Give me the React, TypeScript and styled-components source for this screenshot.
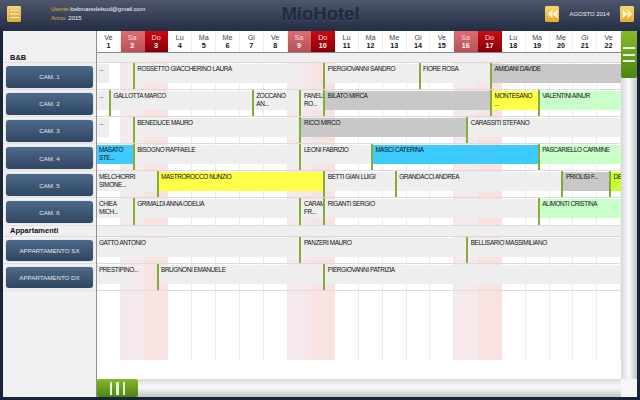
import styled, { createGlobalStyle } from 'styled-components';

type Tone = 'plain' | 'gray' | 'yellow' | 'blue' | 'green' | 'lime';

interface Booking {
  name: string;
  start: number;
  end: number;
  tone?: Tone;
}

const TONES: Record<Tone, string> = {
  plain: '#eeeeee',
  gray: '#c8c8c8',
  yellow: '#ffff4a',
  blue: '#3ecbff',
  green: '#c9ffc9',
  lime: '#ccff33',
};

const DAYS = [
  ['Ve', 1], ['Sa', 2], ['Do', 3], ['Lu', 4], ['Ma', 5], ['Me', 6], ['Gi', 7], ['Ve', 8],
  ['Sa', 9], ['Do', 10], ['Lu', 11], ['Ma', 12], ['Me', 13], ['Gi', 14], ['Ve', 15],
  ['Sa', 16], ['Do', 17], ['Lu', 18], ['Ma', 19], ['Me', 20], ['Gi', 21], ['Ve', 22],
] as const;

// start and end are half days from the first of the month
const ROOMS: { label: string; bookings: Booking[] }[] = [
  {
    label: 'CAM. 1',
    bookings: [
      { name: '...', start: 0, end: 1 },
      { name: 'ROSSETTO GIACCHERINO LAURA', start: 3, end: 17 },
      { name: 'PIERGIOVANNI SANDRO', start: 19, end: 27 },
      { name: 'FIORE ROSA', start: 27, end: 33 },
      { name: 'AMIDANI DAVIDE', start: 33, end: 44, tone: 'gray' },
    ],
  },
  {
    label: 'CAM. 2',
    bookings: [
      { name: '...', start: 0, end: 1 },
      { name: 'GALLOTTA MARCO', start: 1, end: 13 },
      { name: 'ZOCCANO AN...', start: 13, end: 17 },
      { name: 'FANELLI RO...', start: 17, end: 19 },
      { name: 'BILATO MIRCA', start: 19, end: 33, tone: 'gray' },
      { name: 'MONTESANO ...', start: 33, end: 37, tone: 'yellow' },
      { name: 'VALENTINI AINUR', start: 37, end: 44, tone: 'green' },
    ],
  },
  {
    label: 'CAM. 3',
    bookings: [
      { name: '...', start: 0, end: 1 },
      { name: 'BENEDUCE MAURO', start: 3, end: 17 },
      { name: 'RICCI MIRCO', start: 17, end: 31, tone: 'gray' },
      { name: 'CARASSITI STEFANO', start: 31, end: 44 },
    ],
  },
  {
    label: 'CAM. 4',
    bookings: [
      { name: 'MASATO STE...', start: 0, end: 3, tone: 'blue' },
      { name: 'BISOGNO RAFFAELE', start: 3, end: 17 },
      { name: 'LEONI FABRIZIO', start: 17, end: 23 },
      { name: 'MASCI CATERINA', start: 23, end: 37, tone: 'blue' },
      { name: 'PASCARIELLO CARMINE', start: 37, end: 44, tone: 'green' },
    ],
  },
  {
    label: 'CAM. 5',
    bookings: [
      { name: 'MELCHIORRI SIMONE...', start: 0, end: 5 },
      { name: 'MASTROROCCO NUNZIO', start: 5, end: 19, tone: 'yellow' },
      { name: 'BETTI GIAN LUIGI', start: 19, end: 25 },
      { name: 'GRANDACCI ANDREA', start: 25, end: 39 },
      { name: 'PRIOLISI F...', start: 39, end: 43, tone: 'gray' },
      { name: 'DE', start: 43, end: 44, tone: 'lime' },
    ],
  },
  {
    label: 'CAM. 6',
    bookings: [
      { name: 'CHIEA MICH...', start: 0, end: 3 },
      { name: 'GRIMALDI ANNA ODELIA', start: 3, end: 17 },
      { name: 'CARAM FR...', start: 17, end: 19 },
      { name: 'RIGANTI SERGIO', start: 19, end: 37 },
      { name: 'ALIMONTI CRISTINA', start: 37, end: 44, tone: 'green' },
    ],
  },
];

const FLATS: { label: string; bookings: Booking[] }[] = [
  {
    label: 'APPARTAMENTO SX',
    bookings: [
      { name: 'GATTO ANTONIO', start: 0, end: 17 },
      { name: 'PANZERI MAURO', start: 17, end: 31 },
      { name: 'BELLISARIO MASSIMILIANO', start: 31, end: 44 },
    ],
  },
  {
    label: 'APPARTAMENTO DX',
    bookings: [
      { name: 'PRESTIPINO...', start: 0, end: 3 },
      { name: 'BRUGNONI EMANUELE', start: 5, end: 19 },
      { name: 'PIERGIOVANNI PATRIZIA', start: 19, end: 44 },
    ],
  },
];

const GlobalStyle = createGlobalStyle`
  html, body {
    margin: 0;
    padding: 0;
    background: #1a2438;
  }
  * {
    box-sizing: border-box;
  }
`;

const Page = styled.div`
  width: 640px;
  height: 400px;
  overflow: hidden;
  display: flex;
  flex-direction: column;
  background: #1a2438;
  font-family: 'Liberation Sans', Arial, sans-serif;
`;

const Header = styled.header`
  height: 31px;
  flex: none;
  display: grid;
  grid-template-columns: 1fr auto 1fr;
  align-items: center;
  padding: 0 6px 3px 7px;
  background: linear-gradient(#4f576c, #232d43);
`;

const HeaderLeft = styled.div`
  display: flex;
  align-items: center;
`;

const GoldButton = styled.div`
  width: 14px;
  height: 16px;
  flex: none;
  display: flex;
  align-items: center;
  justify-content: center;
  border-radius: 2px;
  background: linear-gradient(#f6d873, #e9a91f);
  box-shadow: inset 0 0 1px #fff3c0;
`;

const UserInfo = styled.div`
  margin-left: 30px;
  font-size: 6px;
  line-height: 9.5px;
  color: #f6f6f6;
`;

const UserKey = styled.span`
  color: #e0b040;
`;

const Brand = styled.div`
  font-size: 18.5px;
  font-weight: 700;
  color: #1e2a42;
  text-shadow: 0 1px 0 #454e64;
`;

const MonthNav = styled.div`
  justify-self: end;
  width: 89px;
  display: flex;
  align-items: center;
  justify-content: space-between;
`;

const MonthLabel = styled.div`
  font-size: 5.9px;
  color: #f0f0f0;
`;

const Panel = styled.div`
  flex: 1;
  min-height: 0;
  margin: 0 3px 3px;
  display: flex;
  background: #fff;
`;

const Sidebar = styled.aside`
  width: 94px;
  flex: none;
  background: #f0f0f0;
  border-right: 1px solid #8f8f8f;
`;

const SideHead = styled.div<{ $height: number; $pad: number }>`
  height: ${(p) => p.$height}px;
  display: flex;
  align-items: flex-end;
  padding: 0 0 ${(p) => p.$pad}px 7px;
  font-size: 7.5px;
  font-weight: 700;
  color: #111;
  border-bottom: 1px solid #dedede;
`;

const SideRow = styled.div`
  height: 27.1px;
  padding: 3px 3px 0;
  border-bottom: 1px solid #e2e2e2;
`;

const RoomButton = styled.div`
  height: 21.5px;
  display: flex;
  align-items: center;
  justify-content: center;
  border-radius: 3px;
  font-size: 6.2px;
  color: #e6e6e6;
  background: linear-gradient(#4d6a8b, #2f4661);
  box-shadow: 0 0 1px #8a97a6;
`;

const Main = styled.div`
  flex: 1;
  min-width: 0;
  display: flex;
  flex-direction: column;
`;

const DayHeader = styled.div`
  height: 22px;
  flex: none;
  display: grid;
  grid-template-columns: repeat(22, 1fr);
  border-bottom: 1px solid #8a8a8a;
  background: #fff;
`;

const DayCell = styled.div<{ $kind: string }>`
  display: flex;
  flex-direction: column;
  align-items: center;
  padding-top: 2.5px;
  font-size: 7.2px;
  line-height: 8.5px;
  color: ${(p) => (p.$kind === 'Sa' || p.$kind === 'Do' ? '#f5dcdc' : '#444')};
  background: ${(p) =>
    p.$kind === 'Sa'
      ? 'linear-gradient(#dc6e72, #b9505a)'
      : p.$kind === 'Do'
        ? 'linear-gradient(#cc0a12, #880008)'
        : '#fff'};
  border-right: 1px solid ${(p) => (p.$kind === 'Sa' || p.$kind === 'Do' ? 'transparent' : '#eee')};
`;

const DayNumber = styled.div<{ $kind: string }>`
  font-weight: 700;
  color: ${(p) => (p.$kind === 'Sa' || p.$kind === 'Do' ? '#fff' : '#111')};
`;

const Calendar = styled.div`
  flex: 1;
  min-height: 0;
  display: grid;
  grid-template-columns: 1fr;
  background: #fff;
`;

const Stripes = styled.div`
  grid-area: 1 / 1;
  height: 307px;
  display: grid;
  grid-template-columns: repeat(22, 1fr);
`;

const Stripe = styled.div<{ $kind: string }>`
  background: ${(p) => (p.$kind === 'Sa' ? '#f6e9eb' : p.$kind === 'Do' ? '#f8e2e2' : '#fff')};
  border-right: 1px solid ${(p) => (p.$kind === 'Sa' || p.$kind === 'Do' ? 'transparent' : '#ececec')};
`;

const Rows = styled.div`
  grid-area: 1 / 1;
  display: flex;
  flex-direction: column;
  align-self: start;
`;

const SectionStrip = styled.div<{ $height: number }>`
  height: ${(p) => p.$height}px;
  background: #efefef;
  border-bottom: 1px solid #d8d8d8;
`;

const RoomRow = styled.div`
  height: 27.1px;
  display: grid;
  grid-template-columns: repeat(44, 1fr);
  border-bottom: 1px solid #dcdcdc;
`;

const Slot = styled.div<{ $start: number; $end: number }>`
  grid-column: ${(p) => p.$start + 1} / ${(p) => p.$end + 1};
  min-width: 0;
  border-left: ${(p) => (p.$start === 0 ? 'none' : '2px solid #86ab38')};
`;

const Bar = styled.div<{ $tone: Tone; $first: boolean }>`
  height: 19px;
  margin-top: 1px;
  padding: 1px 5px 0 ${(p) => (p.$first ? 2 : 2.5)}px;
  font-size: 6.4px;
  line-height: 8px;
  letter-spacing: -0.4px;
  color: #111;
  background: ${(p) => TONES[p.$tone]};
`;

const HScroll = styled.div`
  height: 18px;
  flex: none;
  display: flex;
  background: linear-gradient(#dcdcdc, #fafafa 45%, #c4c4c4);
`;

const HThumb = styled.div`
  width: 41px;
  display: flex;
  align-items: center;
  justify-content: center;
  gap: 4px;
  border-radius: 2px;
  background: linear-gradient(#86b92a, #4c8512);
`;

const HGrip = styled.div`
  width: 2.5px;
  height: 13px;
  background: #e8efe0;
`;

const VScroll = styled.div`
  width: 16px;
  flex: none;
  display: flex;
  flex-direction: column;
  justify-content: space-between;
  background: linear-gradient(90deg, #d8d8d8, #fafafa 50%, #c6c6c6);
`;

const VThumb = styled.div`
  height: 47px;
  display: flex;
  flex-direction: column;
  align-items: center;
  justify-content: center;
  gap: 4.5px;
  border-radius: 2px;
  background: linear-gradient(#86b92a, #4c8512);
`;

const VGrip = styled.div`
  width: 12px;
  height: 2px;
  background: #e8efe0;
`;

const Corner = styled.div`
  height: 18px;
  background: #f6f6f6;
`;

function MenuIcon() {
  return (
    <svg width="11" height="10" viewBox="0 0 11 10">
      <g fill="#f7ecc0" stroke="#b98f2a" strokeWidth="0.4">
        <rect x="0.5" y="0.5" width="10" height="2" />
        <rect x="0.5" y="4" width="10" height="2" />
        <rect x="0.5" y="7.5" width="10" height="2" />
      </g>
    </svg>
  );
}

function SkipIcon({ back }: { back?: boolean }) {
  return (
    <svg width="11" height="10" viewBox="0 0 11 10">
      <path
        d={back ? 'M5.5 0.5V9.5L0.5 5ZM10.5 0.5V9.5L5.5 5Z' : 'M0.5 0.5V9.5L5.5 5ZM5.5 0.5V9.5L10.5 5Z'}
        fill="#fbf3cf"
      />
    </svg>
  );
}

function BookingRow({ bookings }: { bookings: Booking[] }) {
  return (
    <RoomRow>
      {bookings.map((b) => (
        <Slot key={b.name + b.start} $start={b.start} $end={b.end}>
          <Bar $tone={b.tone ?? 'plain'} $first={b.start === 0}>
            {b.name}
          </Bar>
        </Slot>
      ))}
    </RoomRow>
  );
}

export default function App() {
  return (
    <Page>
      <GlobalStyle />
      <Header>
        <HeaderLeft>
          <GoldButton>
            <MenuIcon />
          </GoldButton>
          <UserInfo>
            <div>
              <UserKey>Utente:</UserKey>bebmaredelsud@gmail.com
            </div>
            <div>
              <UserKey>Anno:</UserKey> 2015
            </div>
          </UserInfo>
        </HeaderLeft>
        <Brand>MioHotel</Brand>
        <MonthNav>
          <GoldButton>
            <SkipIcon back />
          </GoldButton>
          <MonthLabel>AGOSTO 2014</MonthLabel>
          <GoldButton>
            <SkipIcon />
          </GoldButton>
        </MonthNav>
      </Header>
      <Panel>
        <Sidebar>
          <SideHead $height={32} $pad={0}>B&amp;B</SideHead>
          {ROOMS.map((r) => (
            <SideRow key={r.label}>
              <RoomButton>{r.label}</RoomButton>
            </SideRow>
          ))}
          <SideHead $height={11} $pad={1}>Appartamenti</SideHead>
          {FLATS.map((r) => (
            <SideRow key={r.label}>
              <RoomButton>{r.label}</RoomButton>
            </SideRow>
          ))}
        </Sidebar>
        <Main>
          <DayHeader>
            {DAYS.map(([name, num]) => (
              <DayCell key={num} $kind={name}>
                {name}
                <DayNumber $kind={name}>{num}</DayNumber>
              </DayCell>
            ))}
          </DayHeader>
          <Calendar>
            <Stripes>
              {DAYS.map(([name, num]) => (
                <Stripe key={num} $kind={name} />
              ))}
            </Stripes>
            <Rows>
              <SectionStrip $height={10} />
              {ROOMS.map((r) => (
                <BookingRow key={r.label} bookings={r.bookings} />
              ))}
              <SectionStrip $height={11} />
              {FLATS.map((r) => (
                <BookingRow key={r.label} bookings={r.bookings} />
              ))}
            </Rows>
          </Calendar>
          <HScroll>
            <HThumb>
              <HGrip />
              <HGrip />
              <HGrip />
            </HThumb>
          </HScroll>
        </Main>
        <VScroll>
          <VThumb>
            <VGrip />
            <VGrip />
            <VGrip />
          </VThumb>
          <Corner />
        </VScroll>
      </Panel>
    </Page>
  );
}
